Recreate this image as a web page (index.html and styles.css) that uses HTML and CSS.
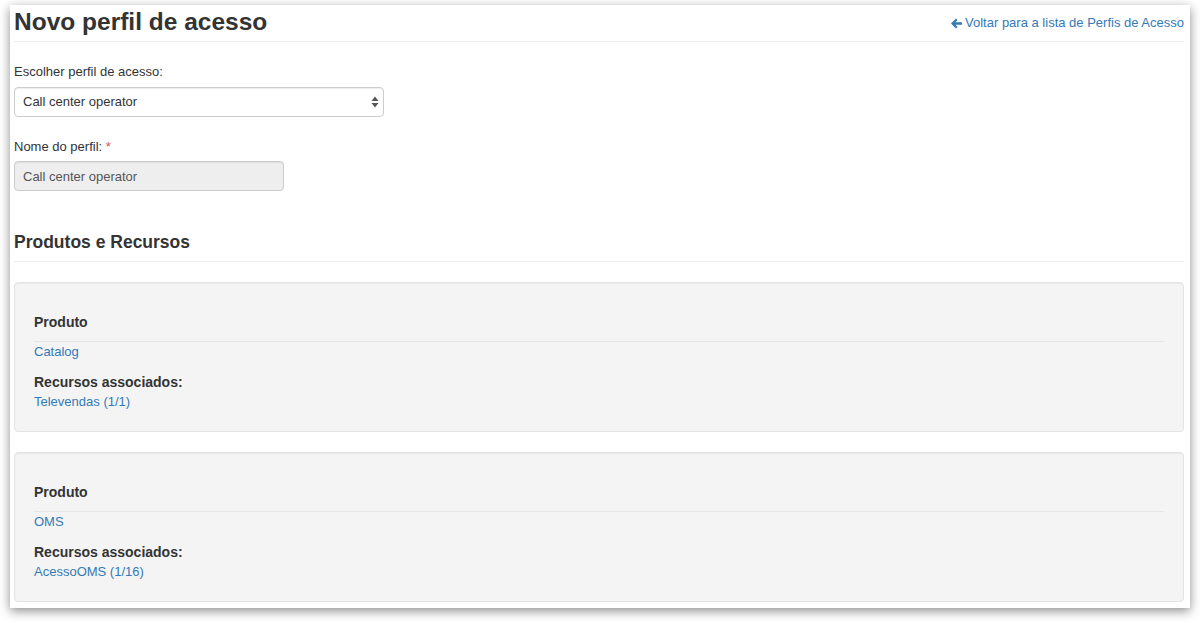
FILE: index.html
```html
<!DOCTYPE html>
<html lang="pt-BR">
<head>
  <meta charset="UTF-8" />
  <meta name="viewport" content="width=device-width, initial-scale=1.0"/>
  <title>Novo perfil de acesso</title>
  <link rel="stylesheet" href="styles.css">
</head>
<body>
  <div class="window">
    <div class="page-header">
      <h1>Novo perfil de acesso</h1>
      <a class="back-link" href="#">
        <svg class="icon-arrow" width="11" height="11" viewBox="0 0 11 11">
          <path d="M0 5.5 L5 0.5 L6.6 2.1 L4.4 4.3 L11 4.3 L11 6.7 L4.4 6.7 L6.6 8.9 L5 10.5 Z" fill="#337ab7"/>
        </svg>Voltar para a lista de Perfis de Acesso</a>
    </div>

    <form class="profile-form">
      <div class="form-group">
        <label for="profileSelect">Escolher perfil de acesso:</label>
        <div class="select-wrap">
          <select id="profileSelect" class="form-control">
            <option>Call center operator</option>
          </select>
          <svg class="select-caret" width="8" height="12" viewBox="0 0 8 12">
            <path d="M4 0.5 L7.5 5 L0.5 5 Z M4 11.5 L7.5 7 L0.5 7 Z" fill="#555"/>
          </svg>
        </div>
      </div>

      <div class="form-group">
        <label for="profileName">Nome do perfil: <span class="required">*</span></label>
        <input id="profileName" class="form-control name-input" type="text" value="Call center operator" disabled>
      </div>
    </form>

    <h3 class="section-title">Produtos e Recursos</h3>

    <div class="well">
      <h5>Produto</h5>
      <a href="#">Catalog</a>
      <h5 class="sub">Recursos associados:</h5>
      <a href="#">Televendas (1/1)</a>
    </div>

    <div class="well">
      <h5>Produto</h5>
      <a href="#">OMS</a>
      <h5 class="sub">Recursos associados:</h5>
      <a href="#">AcessoOMS (1/16)</a>
    </div>
  </div>
</body>
</html>
```

FILE: styles.css
```css
* { box-sizing: border-box; }
html, body { height: 100%; }
body { margin: 0; background: #fff; font-family: "Liberation Sans", Arial, sans-serif; font-size: 13px; line-height: 1.42857; color: #333; overflow: hidden; }
a { color: #337ab7; text-decoration: none; }

.window { margin: 5px 10px 0; height: 603px; background: #fff; padding: 0 6px 0 4px; box-shadow: 0 3px 10px rgba(0, 0, 0, 0.45); }

.page-header { display: flex; justify-content: space-between; align-items: flex-start; border-bottom: 1px solid #eee; padding-top: 2px; height: 37px; }
.page-header h1 { margin: 0; font-size: 24.5px; font-weight: bold; line-height: 30px; color: #333; }
.back-link { display: flex; align-items: center; margin-top: 7px; font-size: 13px; }
.icon-arrow { margin-right: 3px; }

.profile-form { padding-top: 21px; }
.form-group { margin-bottom: 21px; }
.form-group label { display: block; margin-bottom: 5px; font-weight: normal; }
.required { color: #d9534f; }

.form-control { display: block; height: 30px; padding: 5px 8px; font-family: inherit; font-size: 13px; color: #555; background: #fff; border: 1px solid #ccc; border-radius: 4px; box-shadow: inset 0 1px 1px rgba(0, 0, 0, 0.075); }
.select-wrap { position: relative; width: 370px; }
.select-wrap select { width: 100%; appearance: none; -webkit-appearance: none; color: #333; }
.select-caret { position: absolute; right: 5px; top: 9px; pointer-events: none; }
.name-input { width: 270px; background: #eee; color: #555; }

.section-title { margin: 41px 0 20px; padding-bottom: 9px; font-size: 17.5px; font-weight: bold; line-height: 20px; border-bottom: 1px solid #eee; }

.well { margin-bottom: 20px; padding: 19px; background: #f4f4f4; border: 1px solid #e3e3e3; border-radius: 4px; box-shadow: inset 0 1px 1px rgba(0, 0, 0, 0.05); height: 150px; }
.well h5 { margin: 10px 0 0; padding-bottom: 9px; font-size: 14px; line-height: 20px; border-bottom: 1px solid #e6e6e6; }
.well a { display: block; line-height: 19px; }
.well h5.sub { margin-top: 11px; padding-bottom: 0; border-bottom: none; }
```
